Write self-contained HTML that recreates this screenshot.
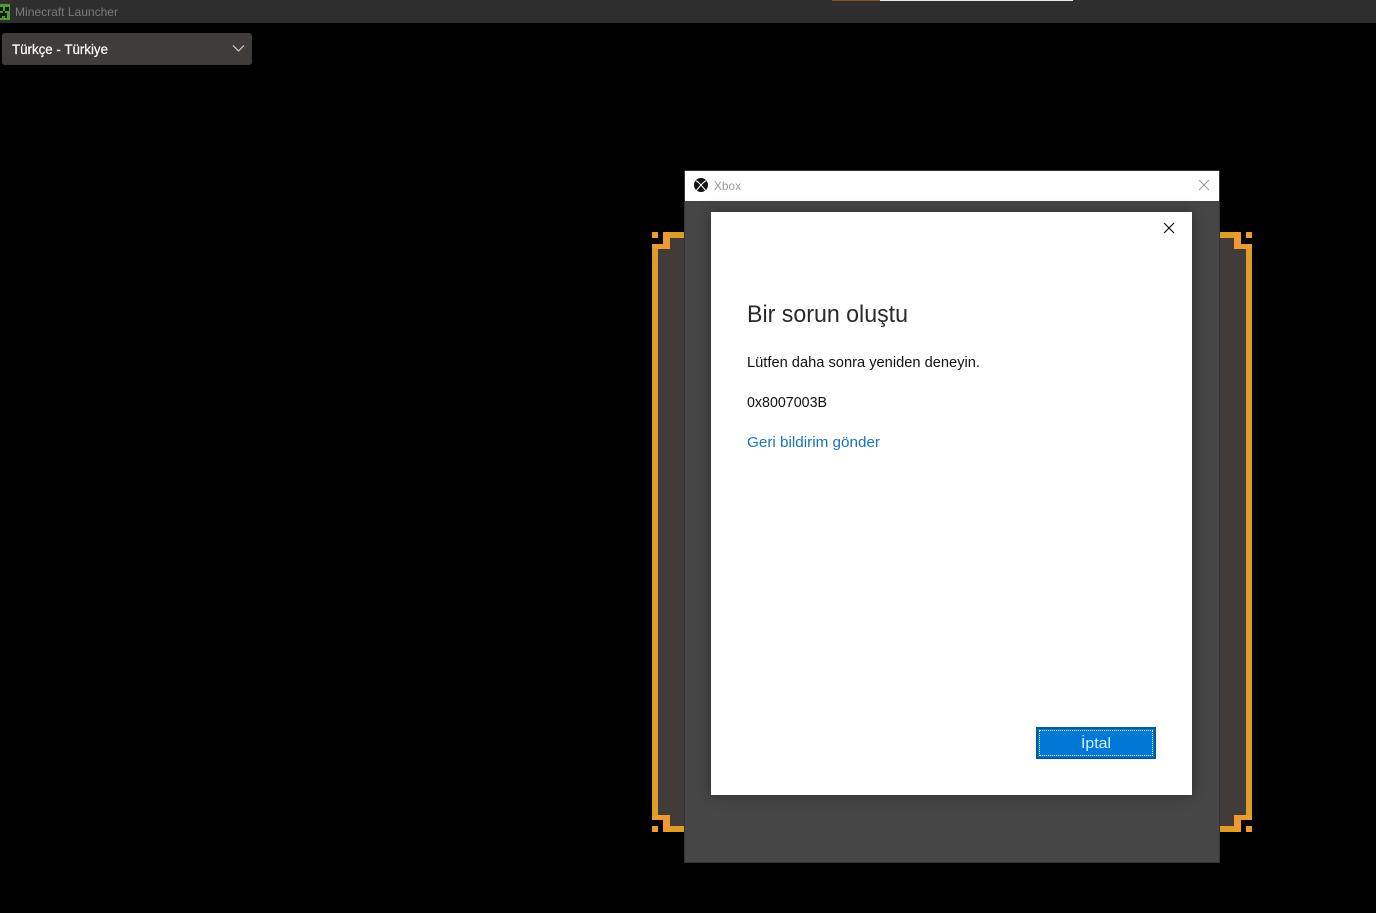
<!DOCTYPE html>
<html lang="tr">
<head>
<meta charset="utf-8">
<title>Minecraft Launcher</title>
<style>
html,body{margin:0;padding:0;background:#000;width:1376px;height:913px;overflow:hidden;font-family:"Liberation Sans",sans-serif}
div,svg{position:absolute;box-sizing:border-box}
#titlebar{left:0;top:0;width:1376px;height:23px;background:#2e2e2e}
#strip1{left:832px;top:0;width:48px;height:1px;background:#8c4a2e}
#strip2{left:880px;top:0;width:193px;height:1px;background:#e8e8e8}
#drop{left:2px;top:33px;width:250px;height:32px;background:#3f3c3a;border-radius:3px}
#win{left:684px;top:170px;width:536px;height:693px;background:#464646;border:1px solid #333}
#winbar{left:0;top:0;width:534px;height:30px;background:#fff}
#dlg{left:711px;top:212px;width:481px;height:583px;background:#fff;box-shadow:0 0 14px rgba(0,0,0,.35)}
#btn{left:1036px;top:727px;width:120px;height:32px;background:#0078d7;border:2px solid #005a9e}
#btn:after{content:"";position:absolute;left:1px;top:1px;right:1px;bottom:1px;border:1px dotted #fff}
#txt{left:0;top:0;width:1376px;height:913px}
</style>
</head>
<body>
<div id="titlebar"></div>
<div id="strip1"></div>
<div id="strip2"></div>
<svg style="left:0;top:4px" width="10" height="16" viewBox="0 0 10 16" shape-rendering="crispEdges">
  <rect width="10" height="16" fill="#4f9a35"/>
  <path d="M0 3h3v4H0zM5 3h4v4H5zM3 7h2v2h2v5H5v-2H2v2H0V9h3z" fill="#0c1a0c"/>
</svg>
<div id="drop"></div>
<svg style="left:232px;top:44px" width="13" height="9" viewBox="0 0 13 9">
  <path d="M1 1.5l5.5 5.5L12 1.5" fill="none" stroke="#d8d8d8" stroke-width="1.1"/>
</svg>

<svg style="left:652px;top:232px" width="600" height="600" viewBox="0 0 600 600" shape-rendering="crispEdges">
  <path d="M18 6H36V594H18V583H6V17H18Z" fill="#403b38"/>
  <path d="M564 6H582V17H594V583H582V594H564Z" fill="#403b38"/>
  <g fill="#dd9d26">
    <rect x="18" y="0" width="18" height="6"/>
    <rect x="0" y="17" width="6" height="566"/>
    <rect x="564" y="0" width="18" height="6"/>
    <rect x="594" y="17" width="6" height="566"/>
    <rect x="18" y="594" width="18" height="6"/>
    <rect x="564" y="594" width="18" height="6"/>
  </g>
  <g fill="#ee9a30">
    <rect x="0" y="0" width="6" height="6"/>
    <rect x="11" y="0" width="7" height="12"/>
    <rect x="0" y="12" width="18" height="5"/>
    <rect x="594" y="0" width="6" height="6"/>
    <rect x="582" y="0" width="7" height="12"/>
    <rect x="582" y="12" width="18" height="5"/>
    <rect x="0" y="583" width="18" height="5"/>
    <rect x="11" y="588" width="7" height="12"/>
    <rect x="0" y="594" width="6" height="6"/>
    <rect x="582" y="583" width="18" height="5"/>
    <rect x="582" y="588" width="7" height="12"/>
    <rect x="594" y="594" width="6" height="6"/>
  </g>
</svg>

<div id="win"><div id="winbar"></div></div>
<div id="dlg"></div>
<div id="btn"></div>

<svg style="left:694px;top:178px" width="14" height="14" viewBox="0 0 14 14">
  <circle cx="7" cy="7" r="7" fill="#111"/>
  <path d="M1.8 2.6C4 3.6 6 5.8 7.6 7.8 9.4 9.8 10.8 11.4 11.8 13M12.2 2.6C10 3.6 8 5.8 6.4 7.8 4.6 9.8 3.2 11.4 2.2 13" fill="none" stroke="#fff" stroke-width="1.1"/>
</svg>
<svg style="left:1198px;top:179px" width="12" height="12" viewBox="0 0 12 12">
  <path d="M1 1l10 10M11 1L1 11" stroke="#9a9a9a" stroke-width="1.1" fill="none"/>
</svg>
<svg style="left:1163px;top:222px" width="12" height="12" viewBox="0 0 12 12">
  <path d="M1 1l10 10M11 1L1 11" stroke="#111" stroke-width="1.2" fill="none"/>
</svg>

<svg id="txt" viewBox="0 0 1376 913" font-family="'Liberation Sans',sans-serif">
  <text x="15" y="16" font-size="12" fill="#7a7a7a" textLength="103" lengthAdjust="spacingAndGlyphs">Minecraft Launcher</text>
  <text x="12" y="54" font-size="13.5" fill="#fff" stroke="#fff" stroke-width=".2" textLength="96" lengthAdjust="spacingAndGlyphs">Türkçe - Türkiye</text>
  <text x="714" y="190" font-size="12" fill="#999" textLength="27" lengthAdjust="spacingAndGlyphs">Xbox</text>
  <text x="747" y="322" font-size="24" fill="#2a2a2a" textLength="161" lengthAdjust="spacingAndGlyphs">Bir sorun oluştu</text>
  <text x="747" y="367" font-size="15" fill="#111" textLength="233" lengthAdjust="spacingAndGlyphs">Lütfen daha sonra yeniden deneyin.</text>
  <text x="747" y="407" font-size="15" fill="#111" textLength="80" lengthAdjust="spacingAndGlyphs">0x8007003B</text>
  <text x="747" y="447" font-size="15" fill="#1a73bd" textLength="133" lengthAdjust="spacingAndGlyphs">Geri bildirim gönder</text>
  <text x="1081" y="748" font-size="15" fill="#d8f0ff" textLength="30" lengthAdjust="spacingAndGlyphs">İptal</text>
</svg>
</body>
</html>
